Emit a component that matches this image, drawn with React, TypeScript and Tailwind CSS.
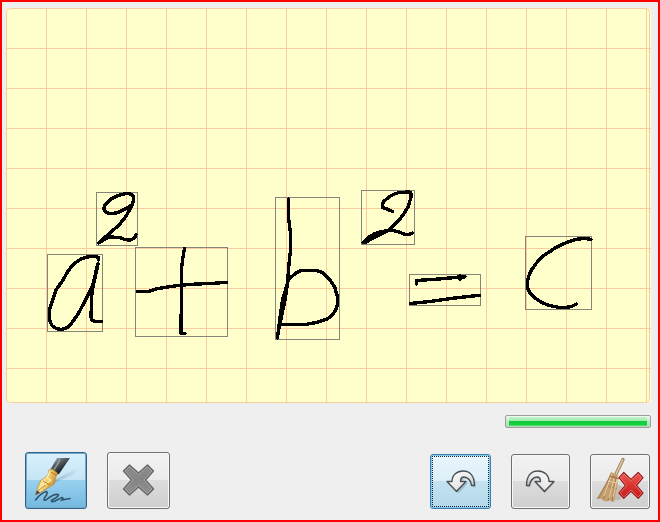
import type { ReactNode } from "react";

const verticals = Array.from({ length: 16 }, (_, i) => 46 + i * 40);
const horizontals = Array.from({ length: 9 }, (_, i) => 48 + i * 40);

const boxes = [
  [96, 192, 41, 53],
  [47, 254, 55, 77],
  [135, 247, 92, 89],
  [275, 197, 64, 142],
  [361, 190, 53, 54],
  [409, 274, 71, 31],
  [525, 236, 66, 73],
];

const strokes = [
  "M130 206C124 210 117 214 111 213.5Q105 213 104.300 210Q103 206 107 203Q111 198 117 196Q124 193.500 128 193.700Q133 194 133.500 197Q134 201 131 207Q127 216 119 225L98.500 243L102 241Q107 237.500 110 237L120 237.500Q125 240.500 130 240Q135 239 136 234.500",
  "M98.700 260V257.500L96 256.700Q88 256 82 258.500Q74 262.500 68 271L63 280L56 290L52 302Q49 309 49.300 315Q49 321 52 325.500Q56 329.500 61.500 329.300Q67 329 71 324Q79 314 84 303L93 284.500L97.700 264M98 264L92 291L91 316Q91 321 95 321.300H101.500",
  "M137.500 291.700H148L156 289L167 287L180 285.300L197 284L211 283.500L226.500 282.300M184.500 248.500L183 257L181.500 268V287L181 333.300H185",
  "M288.500 199V218L290.500 233V250L289 264L287.500 283L282.500 300L280 318L277.500 338M287.500 283L285 300L282 314L278.500 330M287.500 281.500Q290 277 295 274Q299 270 304 270.500H314Q321 270.500 325 275Q331 280 335 288L337.500 297Q338.500 303 336 309Q333 316 326 319.500Q317 323 306.500 324.300L281.500 324.500",
  "M392.500 211.500L388 209.500L382.500 207.300Q382 202 385.500 200Q390 195 399 192.500L409.500 192Q411.500 193 411 197L408.500 206Q404 215 398 221Q391 230 381 234L365 242.500H363L367 238.500Q374 233 382 231.500L391.500 230Q399 231.500 405 234.500H409L412.500 233M364 242L385 231",
  "M416.500 284V280.500L435 279.300L450 278L460 276.800H465M460 275.500V279M410.500 303.500L430 301.500L455 298L479.500 295.300",
  "M591 239.500L586 238.500Q577 238 568 242Q557 246 550 251.500Q540 257 535 265Q528.500 273 527.500 281.500Q526.500 288 530 293Q535 299 543 303Q554 308 566 307.500Q572 307 576.500 304",
];

function Board() {
  return (
    <svg className="block h-[395px] w-[645px] rounded-[4px] bg-[#ffffcc]" viewBox="6 8 645 395">
      <g stroke="#facb9f" strokeWidth="1" fill="none" shapeRendering="crispEdges">
        {verticals.map((x) => <path key={x} d={`M${x + 0.5} 8V403`} />)}
        {horizontals.map((y) => <path key={y} d={`M6 ${y + 0.5}H651`} />)}
      </g>
      <rect x="6.500" y="8.500" width="643" height="394" rx="4" fill="none" stroke="#facb9f" />
      <g fill="none" stroke="#85857a" shapeRendering="crispEdges">
        {boxes.map(([x, y, w, h]) => <rect key={x} x={x + 0.5} y={y + 0.5} width={w} height={h} />)}
      </g>
      <g fill="none" stroke="#000" strokeWidth="3.400" strokeLinecap="round" strokeLinejoin="round" shapeRendering="crispEdges">
        {strokes.map((d) => <path key={d} d={d} />)}
      </g>
    </svg>
  );
}

function ToolButton({ label, className, children }: { label: string; className: string; children: ReactNode }) {
  return (
    <button aria-label={label} className={`shrink-0 overflow-hidden rounded-[3px] border ${className}`}>
      {children}
    </button>
  );
}

const plain = "border-[#707070] bg-[linear-gradient(#f2f2f2_0%,#ebebeb_49%,#dddddd_50%,#cfcfcf_100%)] shadow-[inset_0_0_0_1px_#f8f8f8]";

function PenIcon() {
  return (
    <svg className="block h-full w-full" viewBox="26 453 60 55">
      <defs>
        <linearGradient id="penHandle" x1="0" y1="0" x2=".7" y2="1">
          <stop stopColor="#8b999f" stopOpacity=".45" /><stop offset=".35" stopColor="#62696d" /><stop offset=".7" stopColor="#292e33" /><stop offset="1" stopColor="#0d1115" />
        </linearGradient>
        <linearGradient id="gold" x1="0" y1="0" x2="1" y2=".5">
          <stop stopColor="#d89a26" /><stop offset=".45" stopColor="#ffe391" /><stop offset="1" stopColor="#c5851b" />
        </linearGradient>
        <linearGradient id="penFade" x1="1" y1="0" x2="0" y2="1">
          <stop stopColor="#536b7b" stopOpacity="0" /><stop offset="1" stopColor="#536b7b" stopOpacity=".5" />
        </linearGradient>
      </defs>
      <path d="M42 492L56 479L79 467L73 475L56 482Z" fill="url(#penFade)" />
      <path d="M35.500 500Q41 493 46 491.500Q49 492 44.500 498Q43 501 46 500Q54 493.500 58 494.500Q60 496 52 500Q50 502 54 501.500L62 497.500Q64 498 62 500L70 498.500" fill="none" stroke="#31536b" strokeWidth="1.600" strokeLinecap="round" />
      <path d="M57 458L70 458L59 474L55 475L50 470Z" fill="url(#penHandle)" />
      <path d="M60 460L54 470" stroke="#b8c0c2" strokeWidth="1.400" opacity=".7" />
      <path d="M49 470L52 469L57.500 473L56 477L54 484L51 486L41 492L35.500 495L37.500 488L41 480L43 479L48 475Z" fill="url(#gold)" stroke="#b17d1e" strokeWidth=".6" />
      <path d="M50 471L47 478L51 480L43 486L38 492M45 480L40 490" fill="none" stroke="#fff1a9" strokeWidth="1.200" />
      <path d="M51 472L56 475M43 481L50 485M38 491L45 485" stroke="#9c6715" fill="none" strokeWidth=".8" />
      <path d="M37 490.500L40 492.500L35.500 495Z" fill="#3c4141" />
    </svg>
  );
}

function CrossIcon({ red = false }: { red?: boolean }) {
  return (
    <>
      <defs>
        <linearGradient id={red ? "redCross" : "grayCross"} x1="0" y1="0" x2="0" y2="1">
          <stop stopColor={red ? "#ec5c55" : "#8c8c8c"} /><stop offset=".5" stopColor={red ? "#d93532" : "#858585"} /><stop offset="1" stopColor={red ? "#c7181b" : "#8f8f8f"} />
        </linearGradient>
      </defs>
      <path d="M6 0L15 8L24 0L30 6L22 15L30 24L24 30L15 22L6 30L0 24L8 15L0 6Z" fill={red ? "url(#redCross)" : "url(#grayCross)"} stroke={red ? "#981018" : "#666666"} strokeWidth="1.400" strokeLinejoin="round" />
      <path d="M6 1.500L15 9.500L24 1.500L28.500 6L20.500 15L28.500 24L24 28.500L15 20.500L6 28.500L1.500 24L9.500 15L1.500 6Z" fill="none" stroke={red ? "#f58b7e" : "#aaaaaa"} strokeWidth=".8" />
    </>
  );
}

function ArrowIcon({ flip = false }: { flip?: boolean }) {
  return (
    <svg className="mt-[3px] block h-[31px] w-[35px]" viewBox="-4 -3 35 31">
      <defs>
        <linearGradient id={flip ? "redoFill" : "undoFill"} x1="0" y1="0" x2="1" y2="1">
          <stop stopColor="#fff" /><stop offset=".55" stopColor="#e9e9e9" /><stop offset="1" stopColor="#aaa" />
        </linearGradient>
      </defs>
      <g transform={flip ? "translate(27 0) scale(-1 1)" : undefined}>
        <path d="M1 11H5.500C6 5 10 1 17 1C24 1 28 5 28 15L25 15.500C24 10 21 7 18 7C15 7 14 9 14 11H20L10.500 21.500Z" transform={flip ? "translate(-1 1)" : "translate(1 1)"} fill="#66747b" opacity=".3" />
        <path d="M0 10.500H5C5 4 10 0 16 0C23 0 27.500 5 27.500 14.500H24.500C24 10 21 6 17 6C14 6 13.500 8 13.500 10.500H19L9.500 20.500Z" fill={flip ? "url(#redoFill)" : "url(#undoFill)"} stroke="#4b5055" strokeWidth="1.400" strokeLinejoin="round" />
      </g>
    </svg>
  );
}

function BroomIcon() {
  return (
    <svg className="block h-full w-full" viewBox="591 455 58 53">
      <path d="M612 483L602 501L620 500L626 488Z" fill="#8b6843" opacity=".25" />
      <path d="M623 459.500L615 476" stroke="#a08462" strokeWidth="3.400" strokeLinecap="round" />
      <path d="M623 459.500L615 476" stroke="#e1c8a5" strokeWidth="1.600" />
      <path d="M611 472L618 475L617 486L614 502L609 500L606 502L603 499L597 499L606 484Z" fill="#c5a070" />
      <path d="M611 474L599 498M612 475L603 500M614 476L608 501M616 477L612 502M609 479L597 499M610 481L618 484M607 486L617 489" fill="none" stroke="#9d744b" strokeWidth=".7" />
      <path d="M612 474L604 496M614 478L609 498M617 479L613 497M608 481L617 483" stroke="#ecd0a5" strokeWidth="1" />
      <path d="M610 476L619 479" stroke="#a36a4c" strokeWidth="1.100" />
      <g transform="translate(619 472.500) scale(.8 .86)"><CrossIcon red /></g>
    </svg>
  );
}

export default function App() {
  return (
    <main className="flex h-[522px] w-[660px] flex-col overflow-hidden border-2 border-[#ff0000] bg-[#efefef] pl-1 pt-1.5">
      <Board />
      <div className="ml-[499px] mt-3 h-[13px] w-[146px] rounded-[2px] border border-[#a09ca2] bg-[linear-gradient(#f3faf3,#bde9c4_50%,#aeddb7)] px-[3px] py-px">
        <div className="h-[9px] w-[138px] bg-[linear-gradient(#c6f4cd_0%,#9de8aa_43%,#16c83b_44%,#16d23e_85%,#72df87_100%)]" />
      </div>
      <div className="mt-6 flex items-end pl-[19px]">
        <ToolButton label="Draw" className="h-[57px] w-[62px] border-[#2c628b] bg-[linear-gradient(#d9f0fb_0%,#c4e5f6_49%,#98d1ef_50%,#73b8df_100%)] shadow-[inset_0_0_0_1px_#78a9c6]">
          <PenIcon />
        </ToolButton>
        <ToolButton label="Remove" className={`ml-5 flex h-[57px] w-[63px] items-center justify-center ${plain}`}>
          <svg className="mb-px block h-[33px] w-[33px]" viewBox="-1.500 -1 33 33"><CrossIcon /></svg>
        </ToolButton>
        <ToolButton label="Undo" className="ml-[260px] flex h-[55px] w-[61px] items-center justify-center border-[#3c7fb1] bg-[linear-gradient(#eaf6fc_0%,#dceff8_49%,#c3e2f0_50%,#b4d8ea_100%)] p-px shadow-[inset_0_0_0_1px_#87c9e7]">
          <span className="flex h-full w-full items-center justify-center border border-dotted border-[#102535]"><ArrowIcon /></span>
        </ToolButton>
        <ToolButton label="Redo" className={`ml-5 flex h-[55px] w-[59px] items-center justify-center ${plain}`}><ArrowIcon flip /></ToolButton>
        <ToolButton label="Clear board" className={`ml-5 h-[55px] w-[60px] ${plain}`}><BroomIcon /></ToolButton>
      </div>
    </main>
  );
}
